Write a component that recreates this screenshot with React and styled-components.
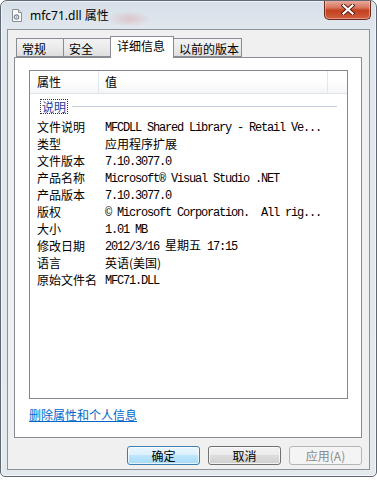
import React from 'react';
import styled, { createGlobalStyle } from 'styled-components';

const Global = createGlobalStyle`
  html, body { margin: 0; padding: 0; background: #ffffff; }
  body { font-family: "Noto Sans CJK SC", sans-serif; font-size: 12px; color: #000; }
`;

const CJK = '"Noto Sans CJK SC", "Noto Sans", sans-serif';
const MONO = '"Liberation Mono", "Noto Sans CJK SC", monospace';

const Win = styled.div`
  box-sizing: border-box;
  width: 377px;
  height: 477px;
  border: 1px solid #5f6873;
  border-radius: 7px 7px 5px 5px;
  background:
    radial-gradient(ellipse 22px 8px at 128px 18px, rgba(214, 140, 140, 0.35), transparent),
    linear-gradient(180deg, #d6dfe8 0px, #e1e7ee 28px, #e4e9ee 100%);
  box-shadow: inset 0 0 0 1px rgba(255, 255, 255, 0.6);
  display: flex;
  flex-direction: column;
  overflow: hidden;
`;

const TitleBar = styled.div`
  height: 28px;
  flex: none;
  display: flex;
  align-items: center;
  padding-left: 11px;
`;

const TitleText = styled.span`
  margin-left: 8px;
  margin-top: 2px;
  font-family: "Noto Sans", ${CJK};
  font-size: 12px;
  color: #000;
  line-height: 14px;
`;

const CloseBtn = styled.div`
  box-sizing: border-box;
  align-self: flex-start;
  margin: -1px 5px 0 auto;
  width: 47px;
  height: 20px;
  border: 1px solid #6b2a1e;
  border-top: none;
  border-radius: 0 0 5px 5px;
  background: linear-gradient(180deg, #eab0a3 0%, #d8765f 40%, #c2401f 55%, #d0603f 100%);
  box-shadow: inset 0 0 0 1px rgba(255, 220, 210, 0.45);
  display: flex;
  align-items: center;
  justify-content: center;
`;

const Client = styled.div`
  box-sizing: border-box;
  flex: none;
  margin: 0 6px;
  height: 441px;
  border: 1px solid #8b9299;
  background: #f0f0f0;
  padding: 6px 7px 4px 6px;
  display: flex;
  flex-direction: column;
`;

const TabRow = styled.div`
  display: flex;
  align-items: flex-end;
  height: 21px;
  padding-left: 2px;
  flex: none;
`;

const Tab = styled.div`
  box-sizing: border-box;
  width: ${p => p.$w}px;
  margin-left: ${p => (p.$first ? 0 : -1)}px;
  height: ${p => (p.$active ? 22 : 19)}px;
  margin-bottom: ${p => (p.$active ? -1 : 0)}px;
  position: relative;
  z-index: ${p => (p.$active ? 2 : 1)};
  border: 1px solid #898c95;
  border-bottom: ${p => (p.$active ? 'none' : '1px solid #898c95')};
  background: ${p => (p.$active ? '#ffffff' : 'linear-gradient(180deg, #f3f3f3 0%, #ebebeb 50%, #dedede 100%)')};
  padding: ${p => (p.$active ? '2px 0 0 6px' : '3px 0 0 5px')};
  font-family: ${CJK};
  font-size: 12px;
  line-height: 14px;
  white-space: nowrap;
`;

const Panel = styled.div`
  box-sizing: border-box;
  flex: none;
  height: 381px;
  border: 1px solid #898c95;
  background: #ffffff;
  padding: 12px 0 0 14px;
  display: flex;
  flex-direction: column;
`;

const List = styled.div`
  box-sizing: border-box;
  width: 319px;
  height: 329px;
  border: 1px solid #828790;
  background: #fff;
  flex: none;
`;

const Header = styled.div`
  box-sizing: border-box;
  height: 23px;
  display: grid;
  grid-template-columns: 69px 229px 1fr;
  border-bottom: 1px solid #e2e4e7;
  background: linear-gradient(180deg, #ffffff 0%, #ffffff 45%, #f4f5f7 100%);
`;

const HeadCell = styled.div`
  box-sizing: border-box;
  padding-left: ${p => p.$pl}px;
  line-height: 22px;
  border-right: ${p => (p.$div ? '1px solid #e3e6ea' : 'none')};
  font-family: ${CJK};
  font-size: 12px;
`;

const GroupRow = styled.div`
  height: 24px;
  display: flex;
  align-items: center;
  padding: 0 10px 0 10px;
`;

const GroupLabel = styled.span`
  border: 1px dotted #333;
  padding: 0 1px;
  line-height: 13px;
  color: #1e3a9a;
  font-family: ${CJK};
  font-size: 12px;
`;

const GroupLine = styled.div`
  flex: 1;
  height: 1px;
  margin-left: 4px;
  background: #c4d0dd;
`;

const Row = styled.div`
  height: 17px;
  display: grid;
  grid-template-columns: 68px 1fr;
  align-items: center;
  line-height: 17px;
  white-space: nowrap;
`;

const Label = styled.div`
  padding-left: 7px;
  font-family: ${CJK};
  font-size: 12px;
`;

const Value = styled.div`
  padding-left: 7px;
  font-family: ${CJK};
  font-size: 12px;
  overflow: hidden;
`;

const Mono = styled.span`
  font-family: ${MONO};
  font-size: 12px;
  letter-spacing: -1.2px;
  white-space: pre;
`;

const Link = styled.a`
  margin-top: 9px;
  align-self: flex-start;
  font-family: ${CJK};
  font-size: 12px;
  line-height: 14px;
  color: #0066cc;
  text-decoration: underline;
  cursor: pointer;
`;

const ButtonRow = styled.div`
  margin-top: 8px;
  height: 19px;
  display: flex;
  justify-content: flex-end;
  gap: 8px;
  padding-right: 0;
  flex: none;
`;

const Button = styled.div`
  box-sizing: border-box;
  width: 73px;
  height: 19px;
  border-radius: 3px;
  display: flex;
  align-items: center;
  justify-content: center;
  font-family: ${CJK};
  font-size: 12px;
  line-height: 17px;
  border: 1px solid ${p => (p.$kind === 'default' ? '#3c7fb1' : p.$kind === 'disabled' ? '#b3b7ba' : '#707070')};
  color: ${p => (p.$kind === 'disabled' ? '#8a8a8a' : '#000')};
  background: ${p =>
    p.$kind === 'default'
      ? 'linear-gradient(180deg, #eaf6fd 0%, #d9f0fc 50%, #bee6fd 50%, #a7d9f5 100%)'
      : p.$kind === 'disabled'
      ? '#f4f4f4'
      : 'linear-gradient(180deg, #f2f2f2 0%, #ebebeb 50%, #dddddd 50%, #cfcfcf 100%)'};
  box-shadow: ${p => (p.$kind === 'disabled' ? 'none' : 'inset 0 0 0 1px rgba(255,255,255,0.7)')};
`;

const FileIcon = () => (
  <svg width="10" height="13" viewBox="0 0 10 13">
    <path d="M0.5 0.5 H6.5 L9.5 3.5 V12.5 H0.5 Z" fill="#fafafa" stroke="#8a8f96" />
    <path d="M6.5 0.5 V3.5 H9.5" fill="#e4e6e9" stroke="#8a8f96" />
    <circle cx="4.5" cy="8" r="2.2" fill="none" stroke="#7d8591" strokeWidth="1.2" />
    <circle cx="4.5" cy="8" r="0.7" fill="#7d8591" />
  </svg>
);

const CloseGlyph = () => (
  <svg width="14" height="11" viewBox="0 0 14 11">
    <path d="M2.5 1.5 L11.5 9.5 M11.5 1.5 L2.5 9.5" stroke="#5a1a10" strokeWidth="4" strokeLinecap="square" />
    <path d="M2.5 1.5 L11.5 9.5 M11.5 1.5 L2.5 9.5" stroke="#ffffff" strokeWidth="2.2" strokeLinecap="square" />
  </svg>
);

const rows = [
  ['文件说明', <Mono>MFCDLL Shared Library - Retail Ve...</Mono>],
  ['类型', '应用程序扩展'],
  ['文件版本', <Mono>7.10.3077.0</Mono>],
  ['产品名称', <Mono>Microsoft® Visual Studio .NET</Mono>],
  ['产品版本', <Mono>7.10.3077.0</Mono>],
  ['版权', <Mono>© Microsoft Corporation.  All rig...</Mono>],
  ['大小', <Mono>1.01 MB</Mono>],
  ['修改日期', <><Mono>2012/3/16 </Mono>星期五<Mono> 17:15</Mono></>],
  ['语言', '英语(美国)'],
  ['原始文件名', <Mono>MFC71.DLL</Mono>],
];

const tabs = [
  { t: '常规', w: 48 },
  { t: '安全', w: 48 },
  { t: '详细信息', w: 64, active: true },
  { t: '以前的版本', w: 69 },
];

export default function App() {
  return (
    <>
      <Global />
      <Win>
        <TitleBar>
          <FileIcon />
          <TitleText>mfc71.dll 属性</TitleText>
          <CloseBtn>
            <CloseGlyph />
          </CloseBtn>
        </TitleBar>
        <Client>
          <TabRow>
            {tabs.map((tb, i) => (
              <Tab key={tb.t} $w={tb.w} $first={i === 0} $active={tb.active}>
                {tb.t}
              </Tab>
            ))}
          </TabRow>
          <Panel>
            <List>
              <Header>
                <HeadCell $pl={7} $div>属性</HeadCell>
                <HeadCell $pl={6} $div>值</HeadCell>
                <HeadCell $pl={0} />
              </Header>
              <GroupRow>
                <GroupLabel>说明</GroupLabel>
                <GroupLine />
              </GroupRow>
              {rows.map(([k, v]) => (
                <Row key={k}>
                  <Label>{k}</Label>
                  <Value>{v}</Value>
                </Row>
              ))}
            </List>
            <Link>删除属性和个人信息</Link>
          </Panel>
          <ButtonRow>
            <Button $kind="default">确定</Button>
            <Button>取消</Button>
            <Button $kind="disabled">应用(A)</Button>
          </ButtonRow>
        </Client>
      </Win>
    </>
  );
}
